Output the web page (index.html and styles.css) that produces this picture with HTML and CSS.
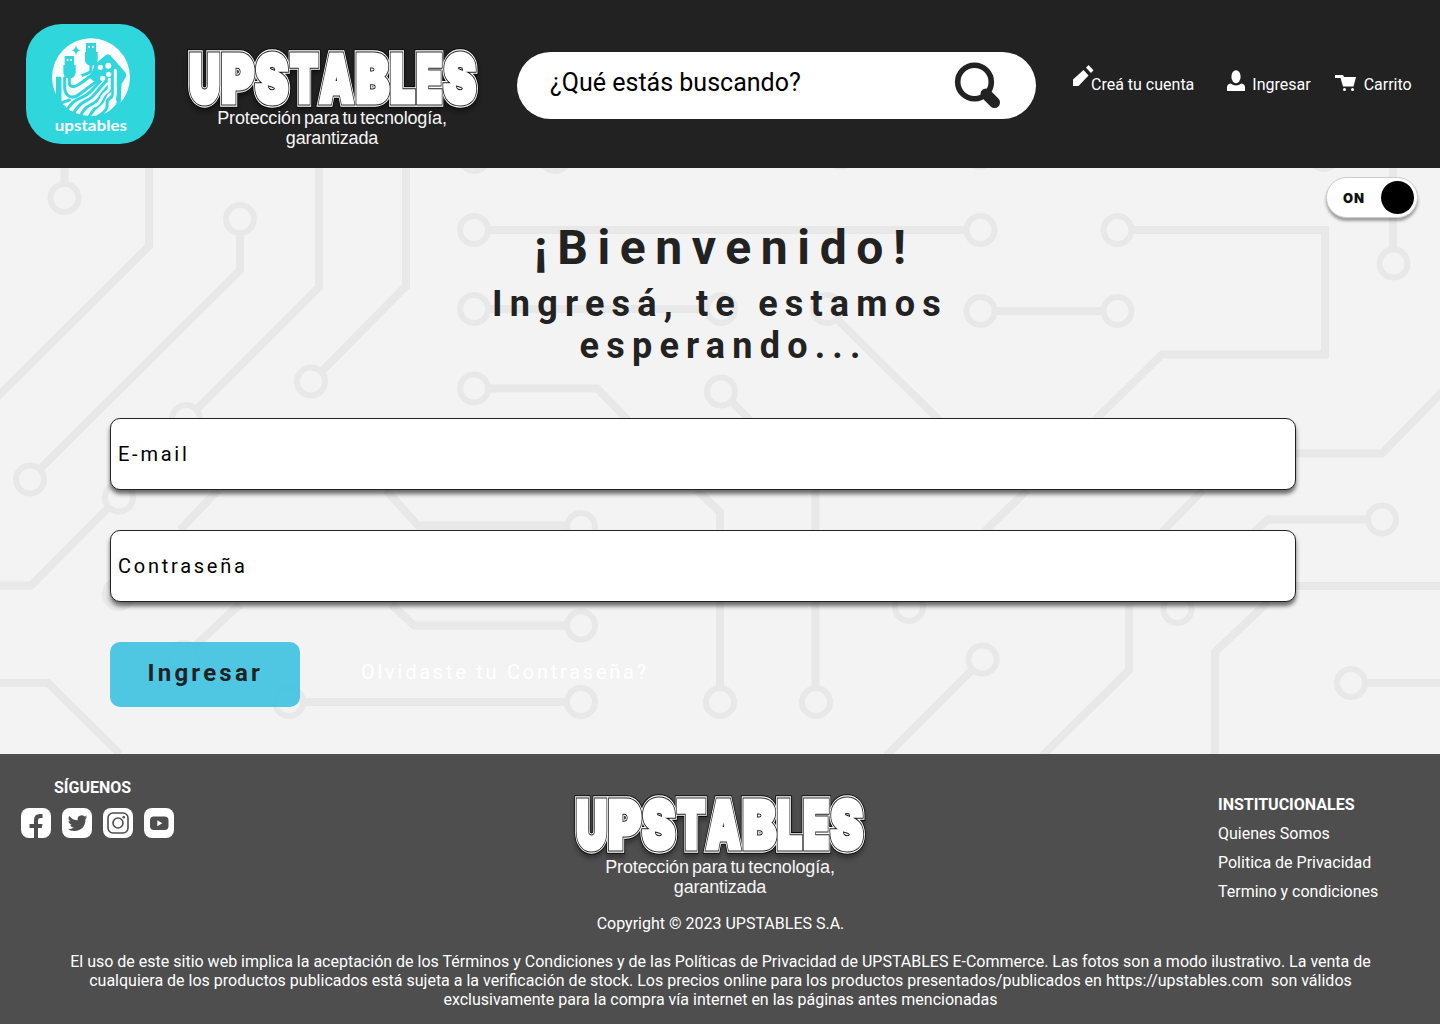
FILE: index.html
```html
<!DOCTYPE html>
<html lang="es">
<head>
<meta charset="utf-8">
<title>UPSTABLES - Ingresar</title>
<link rel="stylesheet" href="styles.css">
</head>
<body>
<header class="header">
  <a class="logo" href="#">
    <svg viewBox="18 27 387 360" width="129" height="120">
      <rect x="18" y="27" width="387" height="360" rx="106" fill="#2fd6dc"/>
      <circle cx="213" cy="187" r="117" fill="#fafdfd"/>
      <g fill="#2fd6dc">
        <path d="M198 84h30v27h5v24q0 12-14 16h-11q-13-4-13-16v-24h3z"/>
        <path d="M134 123h28v27h5v22q0 14-14 18h-10q-13-4-13-18v-22h4z"/>
        <path d="M168 91q2 13 14 15-12 2-14 15-2-13-14-15 12-2 14-15z"/>
        <path d="M221 150l37-30q6-4 12 0l47 53 2 11-14 22-4 54-18 8-8-30-10-35-22-8-22 4-16-14 12-16q4-9 6-19z"/>
        <path d="M120 302q-10-13-12-17v-100h13v76l16 14z"/>
      </g>
      <g fill="none" stroke="#2fd6dc" stroke-width="9" stroke-linecap="round">
        <path d="M213 150v14q0 8-13 12l-20 8"/>
        <path d="M148 188v17q0 10 12 10 9 0 20-9l55-40"/>
        <path d="M134 188v28q0 22 16 29 14 5 29-8l58-43"/>
        <path d="M120 190v75l28-10"/>
        <path d="M137 292q18-35 47-44 20-8 38-29l22-24"/>
        <path d="M158 300q15-31 41-43 18-8 33-29l27-31"/>
        <path d="M181 304q10-25 32-35 20-9 31-30l29-35"/>
        <path d="M208 304q10-20 27-32 14-9 19-27 5-12 17-18v-42"/>
        <path d="M235 303q20-10 26-26l1-20 19-18v-71"/>
        <path d="M259 298q23-11 39-37v-88"/>
      </g>
      <g fill="#fafdfd">
        <circle cx="241" cy="157" r="8"/><circle cx="265" cy="152" r="9"/><circle cx="248" cy="190" r="8"/><circle cx="266" cy="178" r="8"/><circle cx="180" cy="185" r="6"/><circle cx="283" cy="260" r="7"/>
        <path d="M205 93h5v6h-5zM216 93h5v6h-5zM140 132h5v6h-5zM151 132h5v6h-5z"/>
      </g>
      <g fill="none" stroke="#fafdfd" stroke-width="9" stroke-linecap="round">
        <path d="M286 166v72l-4 18"/>
        <path d="M268 192v28q-1 8-12 14-8 5-12 18-5 12-18 20"/>
      </g>
      <text class="logo-text" x="104" y="349" textLength="217" lengthAdjust="spacingAndGlyphs">upstables</text>
    </svg>
  </a>
  <div class="brand">
    <svg class="wordmark" width="296" height="64">
      <defs>
        <text id="wm" y="54.500"><tspan x="4.200" textLength="30.600" lengthAdjust="spacingAndGlyphs">U</tspan><tspan x="36.500" textLength="32.500" lengthAdjust="spacingAndGlyphs">P</tspan><tspan x="70.500" textLength="32.500" lengthAdjust="spacingAndGlyphs">S</tspan><tspan x="105.500" textLength="27.500" lengthAdjust="spacingAndGlyphs">T</tspan><tspan x="134.800" textLength="33.500" lengthAdjust="spacingAndGlyphs">A</tspan><tspan x="171" textLength="33" lengthAdjust="spacingAndGlyphs">B</tspan><tspan x="205.300" textLength="24.500" lengthAdjust="spacingAndGlyphs">L</tspan><tspan x="231.500" textLength="25.500" lengthAdjust="spacingAndGlyphs">E</tspan><tspan x="258.800" textLength="32" lengthAdjust="spacingAndGlyphs">S</tspan></text>
      </defs>
      <use class="wm-edge" href="#wm"/><use class="wm-rim" href="#wm"/><use class="wm-line" href="#wm"/><use class="wm-fill" href="#wm"/>
    </svg>
    <p class="tagline">Protección para tu tecnología, garantizada</p>
  </div>
  <div class="search">
    <span>¿Qué estás buscando?</span>
    <svg width="48" height="48" viewBox="0 0 48 48">
      <circle cx="22.5" cy="21" r="16.8" fill="none" stroke="#222" stroke-width="5.6"/>
      <path d="M34 33l8.500 8.500" stroke="#222" stroke-width="11" stroke-linecap="round"/>
    </svg>
  </div>
  <nav class="nav">
    <a class="nav-create" href="#"><svg width="22" height="22" viewBox="0 0 22 22"><path fill="#fff" d="M1 14.500L11.500 5l5 5.500L6.500 21H1zM14 2.700L16.500 0l5 5.300-2.500 2.700z"/></svg>Creá tu cuenta</a>
    <a class="nav-login" href="#"><svg width="18" height="22" viewBox="0 0 18 22"><ellipse cx="9" cy="6.700" rx="4.600" ry="6.500" fill="#fff"/><path fill="#fff" d="M0 21V17q0-3 3.700-3.500Q6 15.500 9 15.500t5.300-2Q18 14 18 17v4z"/></svg>Ingresar</a>
    <a class="nav-cart" href="#"><svg width="22" height="18" viewBox="0 0 22 18"><path fill="#fff" d="M0 0h8l1 2h12l-2.500 9.500H8L5.500 3H0z"/><circle cx="9.500" cy="14.500" r="1.500" fill="#fff"/><circle cx="17.500" cy="14.500" r="1.500" fill="#fff"/></svg>Carrito</a>
  </nav>
</header>

<main class="main">
  <svg class="circuit" viewBox="0 168 1440 586" width="1440" height="586" aria-hidden="true">
    <g fill="none" stroke="#e8e8e8" stroke-width="8">
      <path d="M64.500 168v15M149 168v78L-4 398M240 235v35L41 468M319 168v119L197 409M406 168v118L322 371"/>
      <path d="M489 230H965M489 309H706M489 388.500H597L628 420M732 402L750 420M838 320L940 421M996 311H1102M1133 230H1325V354.500H1162L1094 421M1393 168V248M1296 453.500H1382L1444 390"/>
      <path d="M108 508L31 585.500H0M218 490L180 530M386 490L418 525.500H566M240 604L195 646M391 604L414 625.500H566M0 683H48L120 754M304 702H566"/>
      <path d="M697 490L720 512V687M815.500 490V687M972 670L886 756M1027 490L984 532M1203 490L1162 532M1367 519.500H1268L1254 532M1296 586H1440M1129 604V670L1042 756M1268 602L1215 652V754M1367 683H1440"/>
    </g>
    <g fill="none" stroke="#e8e8e8" stroke-width="6">
      <circle cx="64.500" cy="198" r="14"/><circle cx="240" cy="219" r="14"/><circle cx="30" cy="479.500" r="14"/><circle cx="186" cy="419" r="14"/><circle cx="311" cy="381.500" r="14"/>
      <circle cx="474" cy="157" r="14"/><circle cx="555" cy="157" r="14"/><circle cx="841" cy="153" r="14"/><circle cx="979" cy="153" r="14"/><circle cx="1324" cy="155" r="14"/>
      <circle cx="474" cy="230" r="14"/><circle cx="474" cy="309" r="14"/><circle cx="474" cy="388.500" r="14"/><circle cx="721" cy="309" r="14"/><circle cx="721" cy="391.500" r="14"/><circle cx="827" cy="309" r="14"/>
      <circle cx="980.500" cy="230" r="14"/><circle cx="980.500" cy="311" r="14"/><circle cx="1117.500" cy="230" r="14"/><circle cx="1117.500" cy="311" r="14"/><circle cx="1393.500" cy="263.500" r="14"/>
      <circle cx="119" cy="497.500" r="14"/><circle cx="119" cy="594" r="14"/><circle cx="184" cy="657" r="14"/><circle cx="289" cy="702" r="14"/>
      <circle cx="581" cy="527" r="14"/><circle cx="581" cy="625.500" r="14"/><circle cx="581" cy="702" r="14"/><circle cx="720" cy="702" r="14"/><circle cx="816" cy="702" r="14"/>
      <circle cx="909" cy="607" r="14"/><circle cx="982.500" cy="659.500" r="14"/><circle cx="1177.500" cy="609" r="14"/><circle cx="1382" cy="519.500" r="14"/><circle cx="1351" cy="683" r="14"/>
    </g>
  </svg>
  <div class="switch"><span>ON</span><i></i></div>
  <h1>¡Bienvenido!</h1>
  <h2>Ingresá, te estamos <span>esperando...</span></h2>
  <form class="form">
    <div class="field">E-mail</div>
    <div class="field">Contraseña</div>
    <div class="actions">
      <button type="button">Ingresar</button>
      <a href="#">Olvidaste tu Contraseña?</a>
    </div>
  </form>
</main>

<footer class="footer">
  <div class="columns">
    <section class="follow">
      <h3>SÍGUENOS</h3>
      <div class="social">
        <svg viewBox="0 0 30 30"><rect width="30" height="30" rx="8" fill="#fff"/><path fill="#4e4e4e" d="M13 30V20H8.500v-4H13v-4q0-6 6-6h2.500v4H19q-2 0-2 2.500V16h4.500l-.7 4H17v10z"/></svg>
        <svg viewBox="0 0 30 30"><rect width="30" height="30" rx="8" fill="#fff"/><path fill="#4e4e4e" d="M25.500 9q-1 .5-2.200.6 1.200-.8 1.700-2-1.200.7-2.500 1a4 4 0 0 0-6.800 3.600Q10.500 12 7.200 7.900q-1.800 3.300 1.200 5.400-1 0-1.800-.5 0 3 3.200 4-1 .2-1.800 0 1 2.600 3.800 2.800-2.500 1.900-5.900 1.700 2.700 1.700 6.200 1.700 11.300-.5 11.400-12 1.200-.9 2-2z"/></svg>
        <svg viewBox="0 0 30 30"><rect width="30" height="30" rx="8" fill="#fff"/><g fill="none" stroke="#4e4e4e" stroke-width="1.600"><rect x="5" y="5" width="20" height="20" rx="5"/><circle cx="15" cy="15" r="5"/></g><circle cx="20.700" cy="9.300" r="1.300" fill="#4e4e4e"/></svg>
        <svg viewBox="0 0 30 30"><rect width="30" height="30" rx="8" fill="#fff"/><rect x="6" y="8.500" width="18.500" height="13.500" rx="4" fill="#4e4e4e"/><path fill="#fff" d="M13.300 12.200v6l5-3z"/></svg>
      </div>
    </section>
    <section class="brand brand-footer">
      <svg class="wordmark" width="296" height="64">
        <use class="wm-edge" href="#wm"/><use class="wm-rim" href="#wm"/><use class="wm-line" href="#wm"/><use class="wm-fill" href="#wm"/>
      </svg>
      <p class="tagline">Protección para tu tecnología, garantizada</p>
      <p class="copyright">Copyright © 2023 UPSTABLES S.A.</p>
    </section>
    <section class="links">
      <h3>INSTITUCIONALES</h3>
      <a href="#">Quienes Somos</a>
      <a href="#">Politica de Privacidad</a>
      <a href="#">Termino y condiciones</a>
    </section>
  </div>
  <p class="legal">El uso de este sitio web implica la aceptación de los Términos y Condiciones y de las Políticas de Privacidad de UPSTABLES E-Commerce. Las fotos son a modo ilustrativo. La venta de<br>cualquiera de los productos publicados está sujeta a la verificación de stock. Los precios online para los productos presentados/publicados en https://upstables.com&nbsp; son válidos<br>exclusivamente para la compra vía internet en las páginas antes mencionadas</p>
</footer>
</body>
</html>
```
FILE: styles.css
```css
* { box-sizing: border-box; }
body { margin: 0; width: 1440px; font: 16px/19px Roboto, sans-serif; color: #222; }
h1, h2, h3, p { margin: 0; }
a { color: inherit; text-decoration: none; }
svg { display: block; flex: none; }

.header { height: 168px; background: #222; display: flex; align-items: flex-start; padding: 24px 28px 0 26px; color: #fff; }
.logo { width: 129px; }
.logo-text { font: 700 45px Lato, sans-serif; fill: #fff; }
.brand { width: 296px; margin: 23px 0 0 30px; text-align: center; }
.wordmark { font: 900 64px Inter, sans-serif; stroke-linejoin: miter; filter: drop-shadow(0 4px 2px rgba(0, 0, 0, .3)); }
.wm-edge { stroke: #0b0b0b; stroke-width: 11.500px; }
.wm-rim { stroke: #fff; stroke-width: 9.300px; }
.wm-line { stroke: #161616; stroke-width: 7px; }
.wm-fill { fill: #fff; stroke: #fff; stroke-width: 5px; }
.tagline { width: 238px; margin: -3px auto 0; font: 18px/20px "Liberation Sans", sans-serif; letter-spacing: -.15px; word-spacing: -1.700px; color: #f6f6f6; position: relative; left: -1px; }

.search { width: 519px; height: 67px; margin: 28px 0 0 36px; padding: 9px 36px 0 33px; border-radius: 34px; background: #fff; color: #000; display: flex; justify-content: space-between; font-size: 25px; line-height: 44px; }
.nav { flex: 1; display: flex; margin-top: 51px; padding-left: 36px; white-space: nowrap; }
.nav a { display: flex; }
.nav-create svg { margin-top: -10px; margin-right: -3px; }
.nav-login { margin-left: 33px; }
.nav-login svg { margin: -5px 7px 0 0; }
.nav-cart { margin-left: 24px; }
.nav-cart svg { margin: 0 7px 0 0; }

.main { position: relative; height: 586px; background: #f3f3f3; padding: 51px 110px 0; text-align: center; overflow: hidden; }
.circuit { position: absolute; inset: 0; }
.main > :not(.circuit):not(.switch) { position: relative; }
.switch { position: absolute; top: 9px; right: 22px; width: 92px; height: 41px; border: 1px solid #ccc; border-radius: 21px; background: #fff; box-shadow: 0 3px 3px rgba(0, 0, 0, .35); display: flex; align-items: center; justify-content: space-between; padding: 0 3px 0 16px; color: #111; font: 900 13px Inter, sans-serif; letter-spacing: .8px; }
.switch i { width: 33px; height: 33px; border-radius: 50%; background: #000; }
h1 { padding-left: 9.600px; font-size: 48px; line-height: 57px; letter-spacing: 9.600px; }
h2 { width: 520px; margin: 7px auto 0; font-size: 36px; line-height: 42px; letter-spacing: 7.200px; }
h2 span { margin-left: 7.200px; }
.form { margin-top: 51px; display: flex; flex-direction: column; gap: 40px; width: 1186px; text-align: left; }
.field { height: 72px; border: 1px solid #222; border-radius: 10px; background: #fff; box-shadow: 0 4px 4px rgba(34, 30, 30, .65); padding-left: 7px; font-size: 20px; line-height: 70px; letter-spacing: 2.750px; color: #000; }
.actions { display: flex; align-items: center; }
.actions button { width: 190px; height: 65px; border: 0; border-radius: 10px; background: rgba(56, 191, 223, .88); color: #222; font: bold 24px Roboto, sans-serif; letter-spacing: 3.250px; padding: 0 0 3px .5px; }
.actions a { margin: -5px 0 0 61px; color: #fff; font-size: 20px; letter-spacing: 2.750px; }

.footer { height: 270px; background: #4e4e4e; color: #fff; }
.columns { display: flex; justify-content: space-between; height: 198px; }
h3 { font-size: 16px; line-height: 19px; }
.follow { width: 222px; padding: 24px 0 0 20px; }
.follow h3 { padding-left: 34px; }
.social { display: flex; gap: 11.300px; margin: 11px 0 0 .6px; }
.social svg { width: 30px; height: 30px; }
.brand-footer { margin: 39px 0 0; }
.brand-footer .tagline { margin-top: 0; left: 0; }
.copyright { margin-top: 17px; padding-left: 1px; }
.links { width: 222px; padding-top: 41px; display: flex; flex-direction: column; gap: 10px; }
.legal { text-align: center; white-space: nowrap; padding-left: 1px; }
```
